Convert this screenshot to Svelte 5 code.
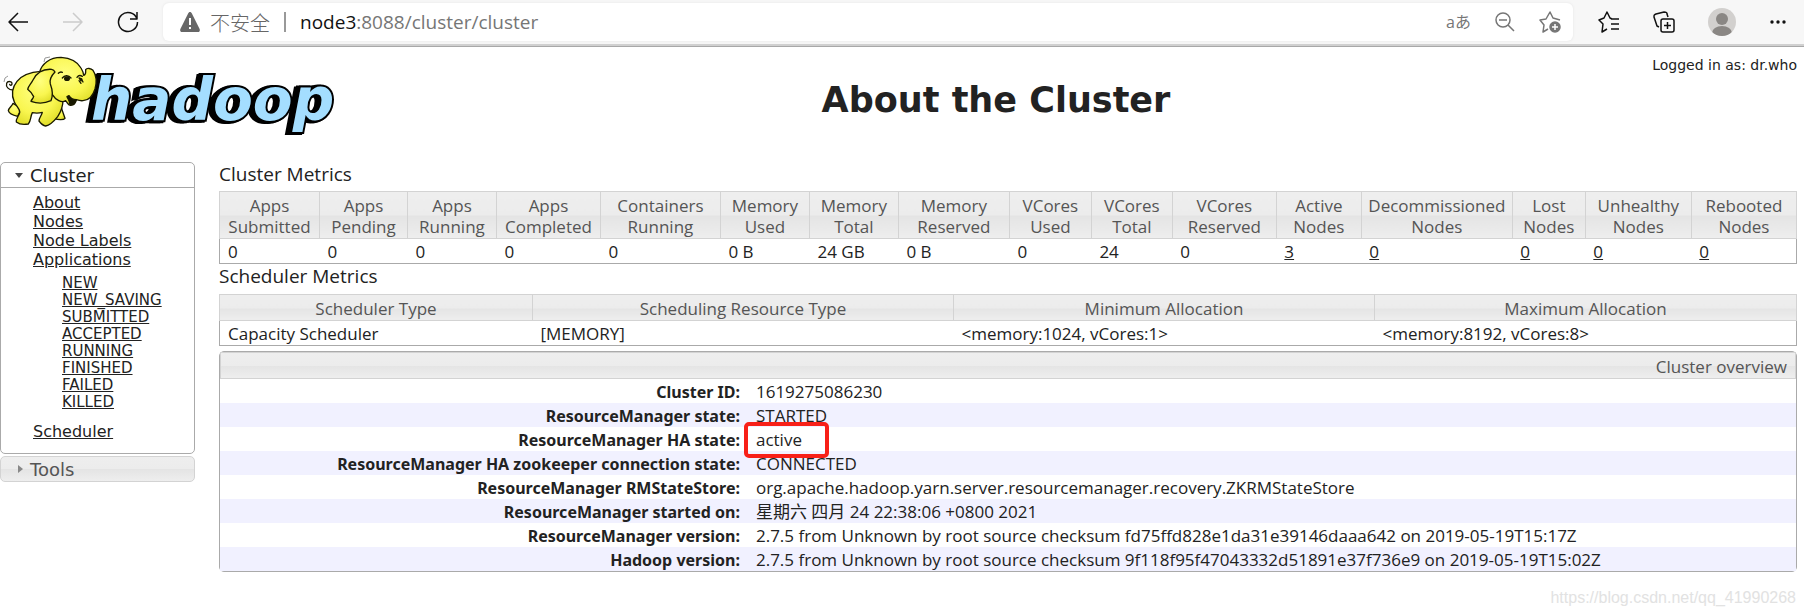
<script>
  const states = [
    "NEW",
    "NEW_SAVING",
    "SUBMITTED",
    "ACCEPTED",
    "RUNNING",
    "FINISHED",
    "FAILED",
    "KILLED",
  ];

  const metrics = [
    { label: ["Apps", "Submitted"], value: "0", size: 100 },
    { label: ["Apps", "Pending"], value: "0", size: 88 },
    { label: ["Apps", "Running"], value: "0", size: 89 },
    { label: ["Apps", "Completed"], value: "0", size: 104 },
    { label: ["Containers", "Running"], value: "0", size: 120 },
    { label: ["Memory", "Used"], value: "0 B", size: 89 },
    { label: ["Memory", "Total"], value: "24 GB", size: 89 },
    { label: ["Memory", "Reserved"], value: "0 B", size: 111 },
    { label: ["VCores", "Used"], value: "0", size: 82 },
    { label: ["VCores", "Total"], value: "24", size: 81 },
    { label: ["VCores", "Reserved"], value: "0", size: 104 },
    { label: ["Active", "Nodes"], value: "3", size: 85, link: true },
    { label: ["Decommissioned", "Nodes"], value: "0", size: 151, link: true },
    { label: ["Lost", "Nodes"], value: "0", size: 73, link: true },
    { label: ["Unhealthy", "Nodes"], value: "0", size: 106, link: true },
    { label: ["Rebooted", "Nodes"], value: "0", size: 105, link: true },
  ];
  const total = metrics.reduce((sum, m) => sum + m.size, 0);

  const scheduler = [
    { label: "Scheduler Type", value: "Capacity Scheduler", size: 313 },
    { label: "Scheduling Resource Type", value: "[MEMORY]", size: 421 },
    { label: "Minimum Allocation", value: "<memory:1024, vCores:1>", size: 421 },
    { label: "Maximum Allocation", value: "<memory:8192, vCores:8>", size: 422 },
  ];

  const overview = [
    ["Cluster ID:", "1619275086230"],
    ["ResourceManager state:", "STARTED"],
    ["ResourceManager HA state:", "active"],
    ["ResourceManager HA zookeeper connection state:", "CONNECTED"],
    [
      "ResourceManager RMStateStore:",
      "org.apache.hadoop.yarn.server.resourcemanager.recovery.ZKRMStateStore",
    ],
    ["ResourceManager started on:", "星期六 四月 24 22:38:06 +0800 2021"],
    [
      "ResourceManager version:",
      "2.7.5 from Unknown by root source checksum fd75ffd828e1da31e39146daaa642 on 2019-05-19T15:17Z",
    ],
    [
      "Hadoop version:",
      "2.7.5 from Unknown by root source checksum 9f118f95f47043332d51891e37f736e9 on 2019-05-19T15:02Z",
    ],
  ];

  let clusterOpen = true;
  let toolsOpen = false;
</script>

<div class="toolbar">
  <div class="nav">
    <button aria-label="Back">
      <svg width="22" height="22" viewBox="0 0 22 22">
        <path d="M21 11H2M11 2L2 11l9 9" />
      </svg>
    </button>
    <button aria-label="Forward" class="off">
      <svg width="22" height="22" viewBox="0 0 22 22">
        <path d="M1 11h19M11 2l9 9-9 9" />
      </svg>
    </button>
    <button aria-label="Refresh">
      <svg width="22" height="22" viewBox="0 0 22 22">
        <path d="M20 8a9.500 9.500 0 1 0 .5 3M20 1v7h-7" />
      </svg>
    </button>
  </div>
  <div class="address">
    <svg class="warn" width="20" height="20" viewBox="0 0 20 20">
      <path d="M10 0c.8 0 1.200.4 1.600 1.100l8 16c.6 1.400 0 2.900-1.600 2.900H2C.4 20-.2 18.500.4 17.100l8-16C8.800.4 9.200 0 10 0z" fill="#666" />
      <path d="M10 6v7M10 15v2" stroke="#fff" stroke-width="2" />
    </svg>
    <span class="insecure">不安全</span>
    <span class="bar"></span>
    <span class="url"><b>node3</b>:8088/cluster/cluster</span>
    <div class="tools">
      <button aria-label="Translate" class="translate">aあ</button>
      <button aria-label="Zoom">
        <svg width="20" height="20" viewBox="0 0 20 20">
          <circle cx="8" cy="8" r="7" />
          <path d="M4 8h8M13 13l6 6" />
        </svg>
      </button>
      <button aria-label="Add to favorites">
        <svg width="22" height="22" viewBox="0 0 22 22">
          <path d="M9 18l-5 3 1-7-4-5 6-1 4-7 3 6 7 2" />
          <circle cx="16" cy="16" r="5" fill="#767676" />
          <path d="M13 16h6M16 13v6" stroke="#fff" />
        </svg>
      </button>
    </div>
  </div>
  <div class="extras">
    <button aria-label="Favorites">
      <svg width="22" height="22" viewBox="0 0 22 22">
        <path d="M14 8l-2-1-3-6-3 6-5 2 4 4-1 8 5-3M13 8h8M13 13h8M13 18h8" />
      </svg>
    </button>
    <button aria-label="Collections">
      <svg width="22" height="22" viewBox="0 0 22 22">
        <rect x="8" y="8" width="13" height="13" rx="2" />
        <path d="M11 14.500h7M14.500 11v7M6 16l-2-1L1 6c0-2 0-2 2-3l8-2c2 0 3 0 3 2l1 3" />
      </svg>
    </button>
    <button aria-label="Profile">
      <svg class="solid" width="28" height="28" viewBox="0 0 28 28">
        <clipPath id="face"><circle cx="14" cy="14" r="14" /></clipPath>
        <circle cx="14" cy="14" r="14" fill="#d2d0ce" />
        <g fill="#8a8784" clip-path="url(#face)">
          <circle cx="14" cy="11" r="6" />
          <ellipse cx="14" cy="25" rx="10" ry="7" />
        </g>
      </svg>
    </button>
    <button aria-label="Settings and more">
      <svg class="solid" width="18" height="22" viewBox="0 0 18 22">
        <g fill="#111">
          <circle cx="3" cy="11" r="1.700" />
          <circle cx="9" cy="11" r="1.700" />
          <circle cx="15" cy="11" r="1.700" />
        </g>
      </svg>
    </button>
  </div>
</div>

<div class="page">
  <header>
    <a class="logo" href="#home" aria-label="hadoop">
      <svg width="344" height="92" viewBox="0 0 344 92">
        <defs>
          <radialGradient id="hide" cx="45%" cy="35%" r="70%">
            <stop offset="0" stop-color="#ffff80" />
            <stop offset="0.6" stop-color="#f9f650" />
            <stop offset="1" stop-color="#dedb25" />
          </radialGradient>
        </defs>
        <text class="word" x="91" y="74">hadoop</text>
        <g
          transform="translate(-1 4) scale(.3333)"
          fill="url(#hide)"
          stroke="#1a1a00"
          stroke-width="4"
          stroke-linejoin="round"
          stroke-linecap="round"
        >
          <path d="M42 120c-14 0-22-10-19-20 3-8 17-7 16 2-1 5-6 5-7 1" fill="none" />
          <path d="M42 160c-2 8-14 14-14 22 2 8 14 14 28 17l12-24z" />
          <path d="M184 165l14 40c-4 6-22 4-32 1l-6-18z" />
          <path d="M126 64c-30 2-58 12-72 30-16 20-16 44-8 62 6 14 18 20 16 32-2 10-12 18-10 28 10 8 26 8 36 6 8-8 6-22 12-34 10 2 20 2 30-1-2 10-10 16-10 26 6 8 14 14 20 15 14-2 28-18 36-28 8-12 16-30 16-50z" />
          <path d="M122 66c6-24 30-44 64-44 30 2 50 14 60 32 6 10 8 16 8 22 8-2 6-12 6-17 4-6 16-4 22 2 10 14 12 34 6 56-6 20-16 34-36 35-8 1-14-1-20-3-2 10-8 18-18 17-8-1-8-8-14-14-12 8-30-2-40-18z" />
          <path d="M204 140c3 8 8 12 8 22 8 4 16-2 20-13-12 0-18-4-22-12z" fill="#181800" />
          <path d="M158 58c-30-2-46 12-56 32-6 12-14 18-16 28 8 6 14 14 18 22-2 6-6 8-8 14 16 6 38 8 60-2 6-14 4-34-2-50-4-16 4-26 14-36-2-4-6-7-10-8z" />
          <path d="M190 84c6-8 18-10 26 0M234 82c4-6 10-7 16-3M178 70c4-4 8-5 12-3M240 92l6 8M248 88l4 8" fill="none" />
          <ellipse cx="204" cy="86" rx="7" ry="5" fill="#181800" />
          <path d="M240 84l8 3-2 6z" fill="#181800" />
        </g>
        <path d="M44 16l1-4 5-1M4 36l1-4 3-2" fill="none" stroke="#999" />
      </svg>
    </a>
    <h1>About the Cluster</h1>
    <div class="user">Logged in as: dr.who</div>
  </header>

  <div class="columns">
    <nav>
      <section class="open">
        <button class="head" on:click={() => (clusterOpen = !clusterOpen)}>
          <span class="arrow down"></span>Cluster
        </button>
        {#if clusterOpen}
          <ul>
            <li><a href="#about">About</a></li>
            <li><a href="#nodes">Nodes</a></li>
            <li><a href="#labels">Node Labels</a></li>
            <li>
              <a href="#apps">Applications</a>
              <ul>
                {#each states as state}
                  <li><a href="#{state}">{state}</a></li>
                {/each}
              </ul>
            </li>
            <li><a href="#scheduler">Scheduler</a></li>
          </ul>
        {/if}
      </section>
      <section class="closed">
        <button class="head" on:click={() => (toolsOpen = !toolsOpen)}>
          <span class="arrow right"></span>Tools
        </button>
      </section>
    </nav>

    <main>
      <h2>Cluster Metrics</h2>
      <table class="grid">
        <colgroup>
          {#each metrics as m}
            <col style="width: {(m.size / total) * 100}%" />
          {/each}
        </colgroup>
        <thead>
          <tr>
            {#each metrics as m}
              <th>{m.label[0]}<br />{m.label[1]}</th>
            {/each}
          </tr>
        </thead>
        <tbody>
          <tr>
            {#each metrics as m}
              <td>
                {#if m.link}<a href="#nodes">{m.value}</a>{:else}{m.value}{/if}
              </td>
            {/each}
          </tr>
        </tbody>
      </table>

      <h2>Scheduler Metrics</h2>
      <table class="grid">
        <colgroup>
          {#each scheduler as s}
            <col style="width: {(s.size / total) * 100}%" />
          {/each}
        </colgroup>
        <thead>
          <tr>
            {#each scheduler as s}
              <th>{s.label}</th>
            {/each}
          </tr>
        </thead>
        <tbody>
          <tr>
            {#each scheduler as s}
              <td>{s.value}</td>
            {/each}
          </tr>
        </tbody>
      </table>

      <div class="overview">
        <table>
          <caption>Cluster overview</caption>
          <colgroup>
            <col class="names" />
            <col />
          </colgroup>
          <tbody>
            {#each overview as [name, value]}
              <tr>
                <th scope="row">{name}</th>
                <td>
                  {#if value === "active"}
                    <span class="marked">{value}</span>
                  {:else}
                    {value}
                  {/if}
                </td>
              </tr>
            {/each}
          </tbody>
        </table>
      </div>
    </main>
  </div>
  <footer>https://blog.csdn.net/qq_41990268</footer>
</div>

<style>
  :global(body) {
    margin: 0;
    background: #fff;
    color: #222;
    font-family: "Open Sans", "Noto Sans CJK SC", sans-serif;
    font-size: 17px;
  }

  a {
    color: inherit;
  }

  button {
    display: flex;
    align-items: center;
    padding: 0;
    border: 0;
    background: none;
    color: inherit;
    font: inherit;
    cursor: pointer;
  }

  .toolbar {
    display: flex;
    align-items: center;
    height: 44px;
    background: #f7f7f7;
    border-bottom: 2px solid #d0d0d0;
    box-shadow: 0 1px 0 #a8a8a8;
  }

  .toolbar svg {
    display: block;
  }

  .toolbar button {
    fill: none;
    stroke: #111;
    stroke-width: 1.500;
    stroke-linejoin: round;
  }

  .toolbar .off {
    stroke: #ccc;
  }

  .toolbar .solid {
    stroke: none;
  }

  .nav {
    display: flex;
    gap: 33px;
    width: 156px;
    padding-left: 7px;
  }

  .address {
    display: flex;
    flex: 1;
    align-items: center;
    height: 38px;
    padding: 0 12px 0 17px;
    border-radius: 6px;
    background: #fff;
    box-shadow: 0 0 3px #e4e4e4;
    color: #767676;
    box-sizing: border-box;
  }

  .insecure {
    margin-left: 10px;
    color: #666;
    font-size: 20px;
    font-weight: 300;
  }

  .bar {
    width: 2px;
    height: 20px;
    margin: 0 14px;
    background: #999;
  }

  .url {
    font-size: 19px;
  }

  .url b {
    color: #111;
    font-weight: normal;
  }

  .tools {
    display: flex;
    align-items: center;
    gap: 24px;
    margin-left: auto;
  }

  .toolbar .tools button {
    stroke: #767676;
  }

  .tools .translate {
    font-size: 16px;
    line-height: 20px;
    stroke: none;
  }

  .extras {
    display: flex;
    align-items: center;
    gap: 33px;
    padding: 0 17px 0 25px;
  }

  header {
    display: grid;
    grid-template-columns: 344px 1fr 160px;
    height: 116px;
    font-family: "DejaVu Sans", sans-serif;
  }

  .logo svg {
    display: block;
  }

  .word {
    fill: #a4deff;
    stroke: #000;
    stroke-width: 4px;
    stroke-linejoin: miter;
    paint-order: stroke;
    filter: drop-shadow(-2px 1px 0 #000) drop-shadow(-3px 0 0 #000);
    font-family: "DejaVu Sans", sans-serif;
    font-size: 58px;
    font-weight: bold;
    font-style: italic;
  }

  h1 {
    margin: 33px 0 0 4px;
    text-align: center;
    font-size: 35px;
    line-height: 42px;
  }

  .user {
    padding: 10px 7px 0 0;
    text-align: right;
    font-size: 14px;
    line-height: 18px;
    white-space: nowrap;
  }

  .columns {
    display: flex;
    gap: 24px;
    padding-right: 7px;
  }

  nav {
    flex: 0 0 195px;
    font-family: "DejaVu Sans", sans-serif;
    font-size: 16px;
    line-height: 19px;
  }

  section {
    border: 1px solid #aaa;
    border-radius: 5px;
    box-sizing: border-box;
  }

  .head {
    width: 100%;
    height: 24px;
    padding-left: 14px;
    font-size: 18px;
  }

  .open {
    margin-bottom: 2px;
  }

  .open .head {
    height: 25px;
    border-bottom: 1px solid #aaa;
  }

  .closed {
    border-color: #d3d3d3;
    background: linear-gradient(#eee, #ececec 50%, #e4e4e4 51%, #eee);
    color: #555;
  }

  .arrow {
    box-sizing: border-box;
    border: 4px solid transparent;
  }

  .down {
    margin-right: 7px;
    border-top: 5px solid #454545;
    border-bottom: 0;
  }

  .right {
    margin: 0 7px 0 3px;
    border-left: 5px solid #888;
    border-right: 0;
  }

  nav ul {
    margin: 0;
    padding: 5px 0 12px 32px;
    list-style: none;
  }

  nav ul ul {
    padding: 6px 0 11px 29px;
    font-size: 15px;
    line-height: 17px;
  }

  main {
    flex: 1;
    min-width: 0;
  }

  h2 {
    margin: 0;
    font-size: 19px;
    font-weight: normal;
    line-height: 24px;
  }

  h2:first-child {
    padding-bottom: 5px;
  }

  .grid + h2 {
    padding-bottom: 6px;
  }

  .grid {
    width: 100%;
    border: 1px solid #aaa;
    border-collapse: collapse;
    table-layout: fixed;
  }

  .grid th {
    padding: 3px 0 1px;
    border: 1px solid #d3d3d3;
    background: linear-gradient(#eee, #ececec 50%, #e4e4e4 51%, #eee);
    color: #555;
    font-weight: normal;
    line-height: 21px;
  }

  .grid td {
    padding: 2px 8px 1px;
    line-height: 21px;
  }

  .overview {
    margin-top: 5px;
    border: 1px solid #aaa;
    border-radius: 5px;
  }

  .overview table {
    width: 100%;
    border-collapse: collapse;
    table-layout: fixed;
  }

  caption {
    padding: 2px 8px 0;
    border: 1px solid #d3d3d3;
    background: linear-gradient(#eee, #ececec 50%, #e4e4e4 51%, #eee);
    color: #555;
    text-align: right;
    line-height: 23px;
  }

  .names {
    width: 33.5%;
  }

  .overview tr:nth-child(even) {
    background: #f1f1ff;
  }

  .overview th,
  .overview td {
    padding: 2px 8px 0;
    text-align: left;
    line-height: 22px;
  }

  .overview th {
    font-family: "Noto Sans", sans-serif;
    font-size: 16px;
    text-align: right;
  }

  .marked {
    position: relative;
  }

  .marked::after {
    content: "";
    position: absolute;
    top: -6px;
    left: -12px;
    width: 77px;
    height: 28px;
    border: 4px solid #f82018;
    border-radius: 5px;
  }

  footer {
    padding: 15px 8px 0 0;
    color: #e2e2e2;
    text-align: right;
    font-family: "Liberation Sans", sans-serif;
    font-size: 16px;
    line-height: 22px;
  }
</style>
